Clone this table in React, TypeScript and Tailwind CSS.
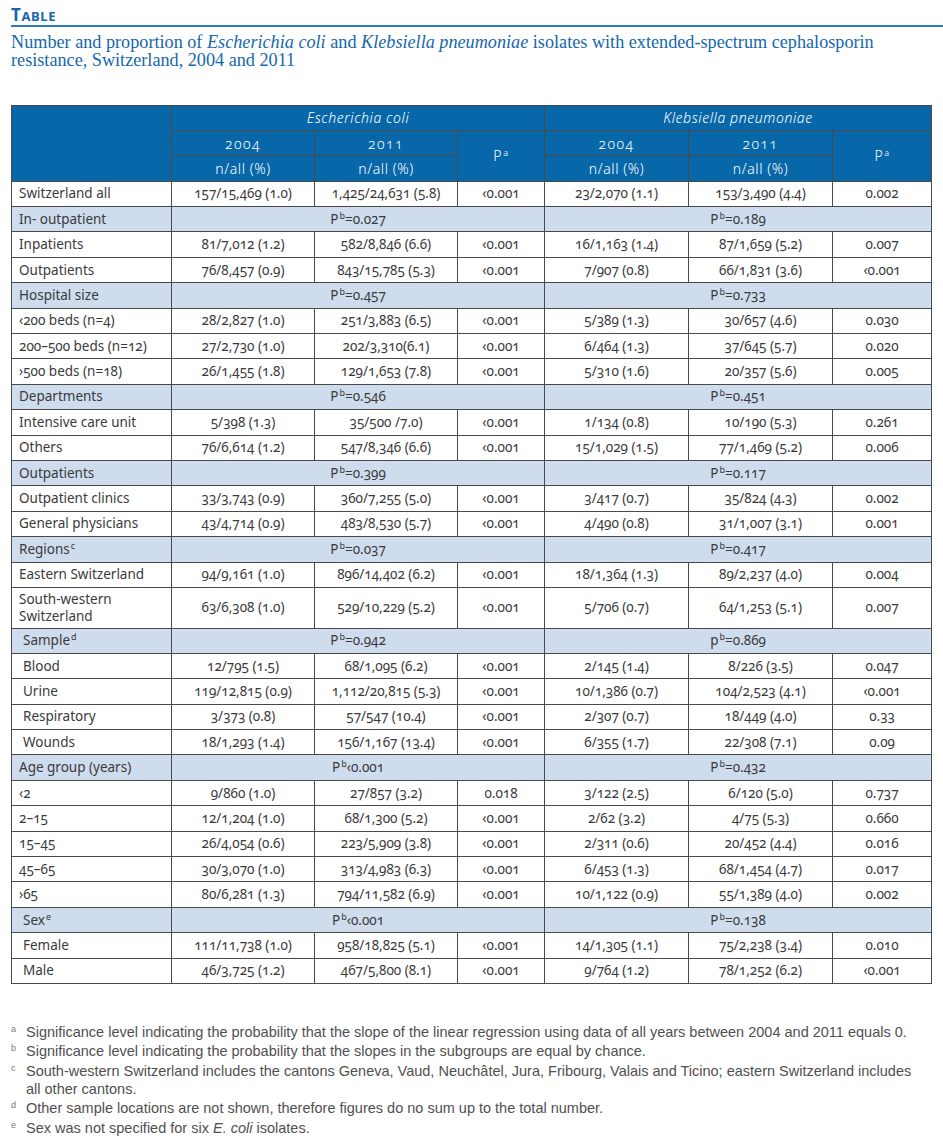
import React from "react";

type DataRow = {
  kind: "data";
  label: React.ReactNode;
  c: string[];
  indent?: boolean;
  tall?: boolean;
};
type SecRow = {
  kind: "sec";
  label: React.ReactNode;
  e: React.ReactNode;
  k: React.ReactNode;
  indent?: boolean;
};
type Row = DataRow | SecRow;

const Sup = ({ children }: { children: React.ReactNode }) => (
  <span className="relative top-[-5px] text-[9px] leading-none ml-[1px]">{children}</span>
);

const Pb = ({ v, lower }: { v: string; lower?: boolean }) => (
  <span>
    {lower ? "p" : "P"}
    <Sup>b</Sup>
    {v}
  </span>
);

const rows: Row[] = [
  { kind: "data", label: "Switzerland all", c: ["157/15,469 (1.0)", "1,425/24,631 (5.8)", "‹0.001", "23/2,070 (1.1)", "153/3,490 (4.4)", "0.002"] },
  { kind: "sec", label: "In- outpatient", e: <Pb v="=0.027" />, k: <Pb v="=0.189" /> },
  { kind: "data", label: "Inpatients", c: ["81/7,012 (1.2)", "582/8,846 (6.6)", "‹0.001", "16/1,163 (1.4)", "87/1,659 (5.2)", "0.007"] },
  { kind: "data", label: "Outpatients", c: ["76/8,457 (0.9)", "843/15,785 (5.3)", "‹0.001", "7/907 (0.8)", "66/1,831 (3.6)", "‹0.001"] },
  { kind: "sec", label: "Hospital size", e: <Pb v="=0.457" />, k: <Pb v="=0.733" /> },
  { kind: "data", label: "‹200 beds (n=4)", c: ["28/2,827 (1.0)", "251/3,883 (6.5)", "‹0.001", "5/389 (1.3)", "30/657 (4.6)", "0.030"] },
  { kind: "data", label: "200–500 beds (n=12)", c: ["27/2,730 (1.0)", "202/3,310(6.1)", "‹0.001", "6/464 (1.3)", "37/645 (5.7)", "0.020"] },
  { kind: "data", label: "›500 beds (n=18)", c: ["26/1,455 (1.8)", "129/1,653 (7.8)", "‹0.001", "5/310 (1.6)", "20/357 (5.6)", "0.005"] },
  { kind: "sec", label: "Departments", e: <Pb v="=0.546" />, k: <Pb v="=0.451" /> },
  { kind: "data", label: "Intensive care unit", c: ["5/398 (1.3)", "35/500 /7.0)", "‹0.001", "1/134 (0.8)", "10/190 (5.3)", "0.261"] },
  { kind: "data", label: "Others", c: ["76/6,614 (1.2)", "547/8,346 (6.6)", "‹0.001", "15/1,029 (1.5)", "77/1,469 (5.2)", "0.006"] },
  { kind: "sec", label: "Outpatients", e: <Pb v="=0.399" />, k: <Pb v="=0.117" /> },
  { kind: "data", label: "Outpatient clinics", c: ["33/3,743 (0.9)", "360/7,255 (5.0)", "‹0.001", "3/417 (0.7)", "35/824 (4.3)", "0.002"] },
  { kind: "data", label: "General physicians", c: ["43/4,714 (0.9)", "483/8,530 (5.7)", "‹0.001", "4/490 (0.8)", "31/1,007 (3.1)", "0.001"] },
  { kind: "sec", label: <span>Regions<Sup>c</Sup></span>, e: <Pb v="=0.037" />, k: <Pb v="=0.417" /> },
  { kind: "data", label: "Eastern Switzerland", c: ["94/9,161 (1.0)", "896/14,402 (6.2)", "‹0.001", "18/1,364 (1.3)", "89/2,237 (4.0)", "0.004"] },
  { kind: "data", tall: true, label: <span>South-western<br />Switzerland</span>, c: ["63/6,308 (1.0)", "529/10,229 (5.2)", "‹0.001", "5/706 (0.7)", "64/1,253 (5.1)", "0.007"] },
  { kind: "sec", indent: true, label: <span>Sample<Sup>d</Sup></span>, e: <Pb v="=0.942" />, k: <Pb v="=0.869" lower /> },
  { kind: "data", indent: true, label: "Blood", c: ["12/795 (1.5)", "68/1,095 (6.2)", "‹0.001", "2/145 (1.4)", "8/226 (3.5)", "0.047"] },
  { kind: "data", indent: true, label: "Urine", c: ["119/12,815 (0.9)", "1,112/20,815 (5.3)", "‹0.001", "10/1,386 (0.7)", "104/2,523 (4.1)", "‹0.001"] },
  { kind: "data", indent: true, label: "Respiratory", c: ["3/373 (0.8)", "57/547 (10.4)", "‹0.001", "2/307 (0.7)", "18/449 (4.0)", "0.33"] },
  { kind: "data", indent: true, label: "Wounds", c: ["18/1,293 (1.4)", "156/1,167 (13.4)", "‹0.001", "6/355 (1.7)", "22/308 (7.1)", "0.09"] },
  { kind: "sec", label: "Age group (years)", e: <Pb v="‹0.001" />, k: <Pb v="=0.432" /> },
  { kind: "data", label: "‹2", c: ["9/860 (1.0)", "27/857 (3.2)", "0.018", "3/122 (2.5)", "6/120 (5.0)", "0.737"] },
  { kind: "data", label: "2–15", c: ["12/1,204 (1.0)", "68/1,300 (5.2)", "‹0.001", "2/62 (3.2)", "4/75 (5.3)", "0.660"] },
  { kind: "data", label: "15–45", c: ["26/4,054 (0.6)", "223/5,909 (3.8)", "‹0.001", "2/311 (0.6)", "20/452 (4.4)", "0.016"] },
  { kind: "data", label: "45–65", c: ["30/3,070 (1.0)", "313/4,983 (6.3)", "‹0.001", "6/453 (1.3)", "68/1,454 (4.7)", "0.017"] },
  { kind: "data", label: "›65", c: ["80/6,281 (1.3)", "794/11,582 (6.9)", "‹0.001", "10/1,122 (0.9)", "55/1,389 (4.0)", "0.002"] },
  { kind: "sec", indent: true, label: <span>Sex<Sup>e</Sup></span>, e: <Pb v="‹0.001" />, k: <Pb v="=0.138" /> },
  { kind: "data", indent: true, label: "Female", c: ["111/11,738 (1.0)", "958/18,825 (5.1)", "‹0.001", "14/1,305 (1.1)", "75/2,238 (3.4)", "0.010"] },
  { kind: "data", indent: true, label: "Male", c: ["46/3,725 (1.2)", "467/5,800 (8.1)", "‹0.001", "9/764 (1.2)", "78/1,252 (6.2)", "‹0.001"] },
];

const bd = "border border-[#4a4a4a]";
const hd = `${bd} bg-[#0767a9] text-white !font-light text-center h-[25.4px] p-0 text-[14px] tracking-[0.6px]`;

const footnotes: { k: string; lines: React.ReactNode[] }[] = [
  { k: "a", lines: ["Significance level indicating the probability that the slope of the linear regression using data of all years between 2004 and 2011 equals 0."] },
  { k: "b", lines: ["Significance level indicating the probability that the slopes in the subgroups are equal by chance."] },
  {
    k: "c",
    lines: [
      "South-western Switzerland includes the cantons Geneva, Vaud, Neuchâtel, Jura, Fribourg, Valais and Ticino; eastern Switzerland includes",
      "all other cantons.",
    ],
  },
  { k: "d", lines: ["Other sample locations are not shown, therefore figures do no sum up to the total number."] },
  { k: "e", lines: [<span key="e">Sex was not specified for six <i>E. coli</i> isolates.</span>] },
];

export default function App() {
  return (
    <div className="w-[943px] h-[1138px] bg-white overflow-hidden">
      {/* Heading */}
      <div className="pt-[6px] pl-[11px]">
        <div className="font-['Noto_Sans',sans-serif] font-bold text-[#1467ad] leading-[18px] tracking-[0.6px]">
          <span className="text-[17px]">T</span>
          <span className="text-[13px]">ABLE</span>
        </div>
      </div>
      <div className="ml-[11px] mt-[0px] h-[1.5px] bg-[#2a78b8]" />
      <div className="pl-[11px] pt-[6px] font-['Liberation_Serif',serif] text-[18.2px] leading-[18px] text-[#1467ad]">
        <div className="whitespace-nowrap">
          Number and proportion of <i>Escherichia coli</i> and <i>Klebsiella pneumoniae</i> isolates with extended-spectrum cephalosporin
        </div>
        <div className="whitespace-nowrap">resistance, Switzerland, 2004 and 2011</div>
      </div>

      {/* Table */}
      <div className="pl-[11px] pt-[36px]">
        <table className="table-fixed border-collapse w-[920px] font-['Noto_Sans',sans-serif] text-[13.5px] leading-[17px] text-[#3a3a3a] oldstyle-nums">
          <colgroup>
            <col className="w-[160px]" />
            <col className="w-[143px]" />
            <col className="w-[143px]" />
            <col className="w-[87px]" />
            <col className="w-[144px]" />
            <col className="w-[144px]" />
            <col className="w-[99px]" />
          </colgroup>
          <thead>
            <tr>
              <th rowSpan={3} className={hd}></th>
              <th colSpan={3} className={`${hd} italic`}>Escherichia coli</th>
              <th colSpan={3} className={`${hd} italic`}>Klebsiella pneumoniae</th>
            </tr>
            <tr>
              <th className={`${hd} !tracking-[1.5px]`}>2004</th>
              <th className={`${hd} !tracking-[1.5px]`}>2011</th>
              <th rowSpan={2} className={hd}>
                P<Sup>a</Sup>
              </th>
              <th className={`${hd} !tracking-[1.5px]`}>2004</th>
              <th className={`${hd} !tracking-[1.5px]`}>2011</th>
              <th rowSpan={2} className={hd}>
                P<Sup>a</Sup>
              </th>
            </tr>
            <tr>
              <th className={hd}>n/all (%)</th>
              <th className={hd}>n/all (%)</th>
              <th className={hd}>n/all (%)</th>
              <th className={hd}>n/all (%)</th>
            </tr>
          </thead>
          <tbody>
            {rows.map((r, i) => {
              if (r.kind === "sec") {
                return (
                  <tr key={i} className="bg-[#cedcee]">
                    <td className={`${bd} h-[25.4px] py-0 ${r.indent ? "pl-[11px]" : "pl-[7px]"}`}>{r.label}</td>
                    <td colSpan={3} className={`${bd} h-[25.4px] py-0 text-center`}>{r.e}</td>
                    <td colSpan={3} className={`${bd} h-[25.4px] py-0 text-center`}>{r.k}</td>
                  </tr>
                );
              }
              const h = r.tall ? "h-[40.6px]" : "h-[25.4px]";
              return (
                <tr key={i}>
                  <td className={`${bd} ${h} py-0 ${r.indent ? "pl-[11px]" : "pl-[7px]"}`}>{r.label}</td>
                  {r.c.map((v, j) => (
                    <td key={j} className={`${bd} ${h} py-0 text-center whitespace-nowrap`}>
                      {v}
                    </td>
                  ))}
                </tr>
              );
            })}
          </tbody>
        </table>
      </div>

      {/* Footnotes */}
      <div className="pt-[39px] pl-[11px] flex flex-col gap-[1.5px] font-['Liberation_Sans',sans-serif] text-[14.5px] leading-[18px] text-[#505050]">
        {footnotes.map((f) => (
          <div key={f.k} className="flex">
            <div className="w-[15px] shrink-0 text-[9px] leading-[12px] text-[#777]">{f.k}</div>
            <div>
              {f.lines.map((l, i) => (
                <div key={i} className="whitespace-nowrap">
                  {l}
                </div>
              ))}
            </div>
          </div>
        ))}
      </div>
    </div>
  );
}
